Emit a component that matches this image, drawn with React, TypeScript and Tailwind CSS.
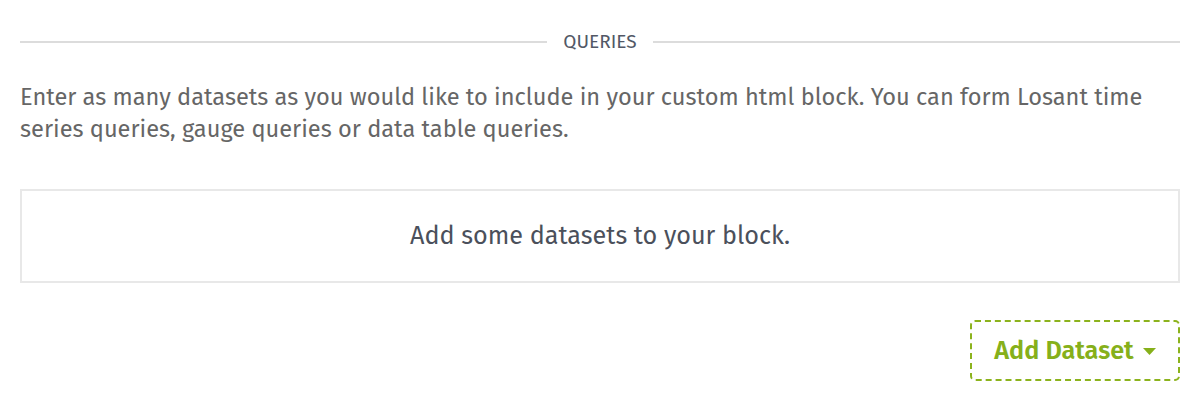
export default function App() {
  return (
    <div className="min-h-[408px] bg-white px-5 pt-[30px] font-['Fira_Sans','Noto_Sans',sans-serif]">
      <div className="flex items-center gap-[16px]">
        <div className="h-[2px] flex-1 bg-[#dcdcdc]" />
        <span className="text-[19px] leading-[24px] uppercase text-[#525866]">Queries</span>
        <div className="h-[2px] flex-1 bg-[#dcdcdc]" />
      </div>

      <p className="mt-[27px] text-[23.6px] leading-[32px] text-[#666666]">
        Enter as many datasets as you would like to include in your custom html block. You can form Losant time
        series queries, gauge queries or data table queries.
      </p>

      <div className="mt-[44px] flex h-[94px] items-center justify-center border-2 border-[#e8e8e8]">
        <p className="text-[25.2px] text-[#4b505b]">Add some datasets to your block.</p>
      </div>

      <div className="mt-[37px] flex justify-end">
        <button className="flex h-[61px] w-[210px] items-center justify-center gap-[9px] rounded-[5px] border-2 border-dashed border-[#8cb31d] text-[25.2px] font-semibold text-[#86b01a]">
          Add Dataset
          <svg width="13" height="7" viewBox="0 0 13 7" className="mt-[2px]">
            <path d="M0 0h13L6.5 7z" fill="#86b01a" />
          </svg>
        </button>
      </div>
    </div>
  );
}
